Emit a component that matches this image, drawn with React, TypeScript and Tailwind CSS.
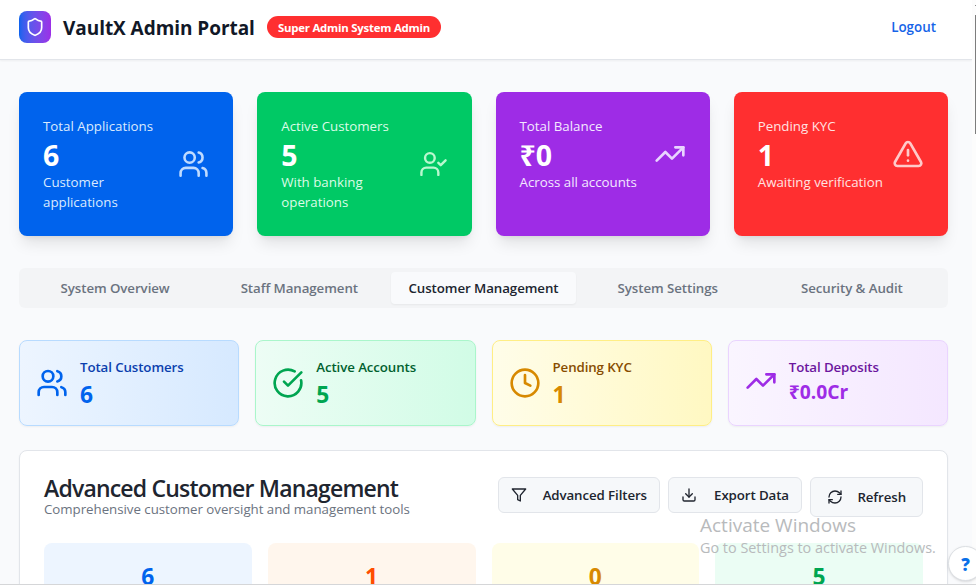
import type { ReactNode } from "react";
import {
  CircleCheckBig,
  Clock,
  TrendingUp,
  TriangleAlert,
  Users,
} from "lucide-react";

function UserCheckIcon({ className }: { className?: string }) {
  return (
    <svg viewBox="0 0 24 24" fill="none" stroke="currentColor" strokeWidth="2" strokeLinecap="round" strokeLinejoin="round" className={className}>
      <path d="m16 11 2 2 4-4" />
      <path d="M16 21v-2a4 4 0 0 0-4-4H6a4 4 0 0 0-4 4v2" />
      <circle cx="9" cy="7" r="4" />
    </svg>
  );
}

function FunnelIcon() {
  return (
    <svg viewBox="0 0 24 24" fill="none" stroke="currentColor" strokeWidth="2" strokeLinecap="round" strokeLinejoin="round" className="size-4 shrink-0">
      <path d="M22 3H2l8 9.46V19l4 2v-8.54L22 3z" />
    </svg>
  );
}

function DownloadIcon() {
  return (
    <svg viewBox="0 0 24 24" fill="none" stroke="currentColor" strokeWidth="2" strokeLinecap="round" strokeLinejoin="round" className="size-4 shrink-0">
      <path d="M21 15v4a2 2 0 0 1-2 2H5a2 2 0 0 1-2-2v-4" />
      <path d="m7 10 5 5 5-5" />
      <path d="M12 15V3" />
    </svg>
  );
}

function RefreshIcon() {
  return (
    <svg viewBox="0 0 24 24" fill="none" stroke="currentColor" strokeWidth="2" strokeLinecap="round" strokeLinejoin="round" className="size-4 shrink-0">
      <path d="M3 12a9 9 0 0 1 9-9 9.75 9.75 0 0 1 6.74 2.74L21 8" />
      <path d="M21 3v5h-5" />
      <path d="M21 12a9 9 0 0 1-9 9 9.75 9.75 0 0 1-6.74-2.74L3 16" />
      <path d="M8 16H3v5" />
    </svg>
  );
}

type SummaryProps = {
  label: string;
  value: string;
  lines: string[];
  color: string;
  tint: string;
  icon: ReactNode;
};

function SummaryCard({ label, value, lines, color, tint, icon }: SummaryProps) {
  return (
    <div className={`h-36 rounded-lg p-6 shadow-lg ${color}`}>
      <div className="flex items-center justify-between">
        <div className="whitespace-nowrap">
          <p className={`text-[13.3px] leading-5 ${tint}`}>{label}</p>
          <p className="h-9 text-[28.5px] leading-[38px] font-bold text-white">{value}</p>
          {lines.map((line) => (
            <p key={line} className={`text-[13.3px] leading-5 ${tint}`}>{line}</p>
          ))}
        </div>
        {icon}
      </div>
    </div>
  );
}

type StatProps = {
  label: string;
  value: string;
  frame: string;
  labelColor: string;
  valueStyle: string;
  icon: ReactNode;
};

function StatCard({ label, value, frame, labelColor, valueStyle, icon }: StatProps) {
  return (
    <div className={`h-[86px] rounded-lg border bg-linear-to-r p-4 shadow-xs ${frame}`}>
      <div className="flex items-center gap-3">
        {icon}
        <div className="whitespace-nowrap">
          <p className={`text-[13.3px] leading-5 font-semibold tracking-[-0.1px] ${labelColor}`}>{label}</p>
          <p className={`font-bold ${valueStyle}`}>{value}</p>
        </div>
      </div>
    </div>
  );
}

function Tile({ value, color }: { value: string; color: string }) {
  return (
    <div className={`h-24 rounded-lg p-4 pt-[18px] text-center text-[22.8px] leading-8 font-bold ${color}`}>
      {value}
    </div>
  );
}

const tabs = ["System Overview", "Staff Management", "Customer Management", "System Settings", "Security & Audit"];

const button =
  "flex items-center rounded-md border border-[#e2e5ea] bg-[#f6f8fa] text-[13.3px] font-semibold tracking-[-0.1px] text-[#20252f] whitespace-nowrap";

export default function App() {
  return (
    <div className="relative h-[585px] w-[976px] overflow-hidden bg-[#f9fafc] font-['Open_Sans','Noto_Sans',sans-serif]">
      <div className="flex">
        <div className="w-[972px] shrink-0">
          <header className="flex h-[60px] items-center justify-between border-b border-[#e2e5ea] bg-white pt-0 pr-9 pb-[5px] pl-[19px] shadow-xs">
            <div className="flex items-center">
              <div className="flex size-8 items-center justify-center rounded-lg bg-linear-to-r from-[#0563ee] to-[#9c2ee7]">
                <svg viewBox="0 0 24 24" fill="none" stroke="white" strokeWidth="2" strokeLinecap="round" strokeLinejoin="round" className="size-5">
                  <path d="M20 13c0 5-3.500 7.500-7.660 8.950a1 1 0 0 1-.67-.01C7.500 20.500 4 18 4 13V6a1 1 0 0 1 1-1c2 0 4.500-1.200 6.240-2.720a1.170 1.170 0 0 1 1.520 0C14.510 3.810 17 5 19 5a1 1 0 0 1 1 1z" />
                </svg>
              </div>
              <h1 className="ml-3 w-[192px] pt-0.5 text-[19px] leading-7 font-bold tracking-[-0.05px] whitespace-nowrap text-[#111827]">VaultX Admin Portal</h1>
              <span className="ml-3 flex h-[22px] w-[174px] items-center justify-center rounded-full bg-[#ff2f30] pt-px text-[11.4px] font-bold tracking-[-0.22px] whitespace-nowrap text-white">
                Super Admin System Admin
              </span>
            </div>
            <button className="text-[13.4px] leading-5 font-semibold text-[#1664e8]">Logout</button>
          </header>

          <main className="pt-8 pr-6 pl-[19px]">
            <section className="grid grid-cols-4 gap-6">
              <SummaryCard label="Total Applications" value="6" lines={["Customer", "applications"]} color="bg-[#0063ed]" tint="text-[#dbeafe]" icon={<Users className="h-8 w-[31px] text-[#bfdbff]" />} />
              <SummaryCard label="Active Customers" value="5" lines={["With banking", "operations"]} color="bg-[#00c965]" tint="text-[#dcfce7]" icon={<UserCheckIcon className="h-8 w-[29px] text-[#b9f8cf]" />} />
              <SummaryCard label="Total Balance" value="₹0" lines={["Across all accounts"]} color="bg-[#9e2ce6]" tint="text-[#f3e8ff]" icon={<TrendingUp className="size-8 text-[#e9d5ff]" />} />
              <SummaryCard label="Pending KYC" value="1" lines={["Awaiting verification"]} color="bg-[#ff2f30]" tint="text-[#ffe2e2]" icon={<TriangleAlert className="size-8 text-[#ffcaca]" />} />
            </section>

            <nav className="mt-8 grid h-10 grid-cols-5 rounded-md bg-[#f3f4f6] p-1 text-[13.3px] font-semibold whitespace-nowrap">
              {tabs.map((tab) => (
                <button
                  key={tab}
                  className={
                    tab === "Customer Management"
                      ? "rounded bg-[#f9fafc] pt-0.5 tracking-[-0.08px] text-[#20252f] shadow-xs"
                      : "rounded pt-0.5 tracking-[-0.08px] text-[#6b7380]"
                  }
                >
                  {tab}
                </button>
              ))}
            </nav>

            <section className="mt-8 grid grid-cols-4 gap-4">
              <StatCard label="Total Customers" value="6" frame="border-[#b8dbff] from-[#edf5ff] to-[#d6e9ff]" labelColor="text-[#0b3fae]" valueStyle="h-8 text-[22.8px] leading-[35px] text-[#0063ed]" icon={<Users className="size-8 shrink-0 text-[#0063ed]" />} />
              <StatCard label="Active Accounts" value="5" frame="border-[#aaf6cb] from-[#edfdf5] to-[#d1fce6]" labelColor="text-[#01612f]" valueStyle="h-8 text-[22.8px] leading-[35px] text-[#00a551]" icon={<CircleCheckBig className="size-8 shrink-0 text-[#00a551]" />} />
              <StatCard label="Pending KYC" value="1" frame="border-[#ffee85] from-[#fffde9] to-[#fff8c2]" labelColor="text-[#874c00]" valueStyle="h-8 text-[22.8px] leading-[35px] text-[#d78900]" icon={<Clock className="size-8 shrink-0 text-[#d78900]" />} />
              <StatCard label="Total Deposits" value="₹0.0Cr" frame="border-[#ead4ff] from-[#faf5ff] to-[#f4e7ff]" labelColor="text-[#6c169e]" valueStyle="h-7 text-[19.3px] leading-[30px] text-[#9e2ce6]" icon={<TrendingUp className="size-8 shrink-0 text-[#9e2ce6]" />} />
            </section>

            <section className="mt-6 h-[240px] rounded-lg border border-[#e2e5ea] bg-white p-6 shadow-xs">
              <div className="flex h-[68px] items-start justify-between">
                <div className="pt-px whitespace-nowrap">
                  <h2 className="text-[23px] leading-6 font-semibold tracking-[-0.81px] text-[#20252f]">Advanced Customer Management</h2>
                  <p className="text-[13.3px] leading-[18px] tracking-[-0.03px] text-[#6b7380]">Comprehensive customer oversight and management tools</p>
                </div>
                <div className="flex items-start gap-2 pt-[2px]">
                  <button className={`${button} h-9 w-[162px] justify-between px-3`}>
                    <FunnelIcon />
                    <span className="pt-0.5">Advanced Filters</span>
                  </button>
                  <button className={`${button} h-9 w-[134px] justify-between px-3`}>
                    <DownloadIcon />
                    <span className="pt-0.5">Export Data</span>
                  </button>
                  <button className={`${button} h-10 w-[113px] justify-between px-4`}>
                    <RefreshIcon />
                    <span className="pt-0.5">Refresh</span>
                  </button>
                </div>
              </div>
              <div className="grid grid-cols-4 gap-4">
                <Tile value="6" color="bg-[#edf5ff] text-[#0063ed]" />
                <Tile value="1" color="bg-[#fff6ed] text-[#ff4d00]" />
                <Tile value="0" color="bg-[#fffde8] text-[#d78900]" />
                <Tile value="5" color="bg-[#ebfdf4] text-[#00a551]" />
              </div>
            </section>
          </main>
        </div>
        <div className="h-[585px] w-1 shrink-0 bg-[#fcfcfc] pl-[3px]">
          <div className="mt-[5px] h-px w-px bg-[#8b8b8b]" />
          <div className="mt-[9px] h-[119px] w-px bg-[#7d7d7d]" />
        </div>
      </div>

      <button className="absolute top-[546px] left-[948px] flex size-[35px] items-center justify-center rounded-full border border-[#dcdfe3] bg-white pt-0.5 text-[17px] font-extrabold text-[#0a6fe8] shadow-sm">
        ?
      </button>
      <div className="pointer-events-none absolute top-[513px] left-[700px] whitespace-nowrap text-[#b8babc]">
        <p className="text-[19px] leading-6">Activate Windows</p>
        <p className="text-[14.4px] leading-[21px]">Go to Settings to activate Windows.</p>
      </div>
      <div className="absolute bottom-0 left-0 h-px w-full bg-[#d5d6d8]" />
    </div>
  );
}
